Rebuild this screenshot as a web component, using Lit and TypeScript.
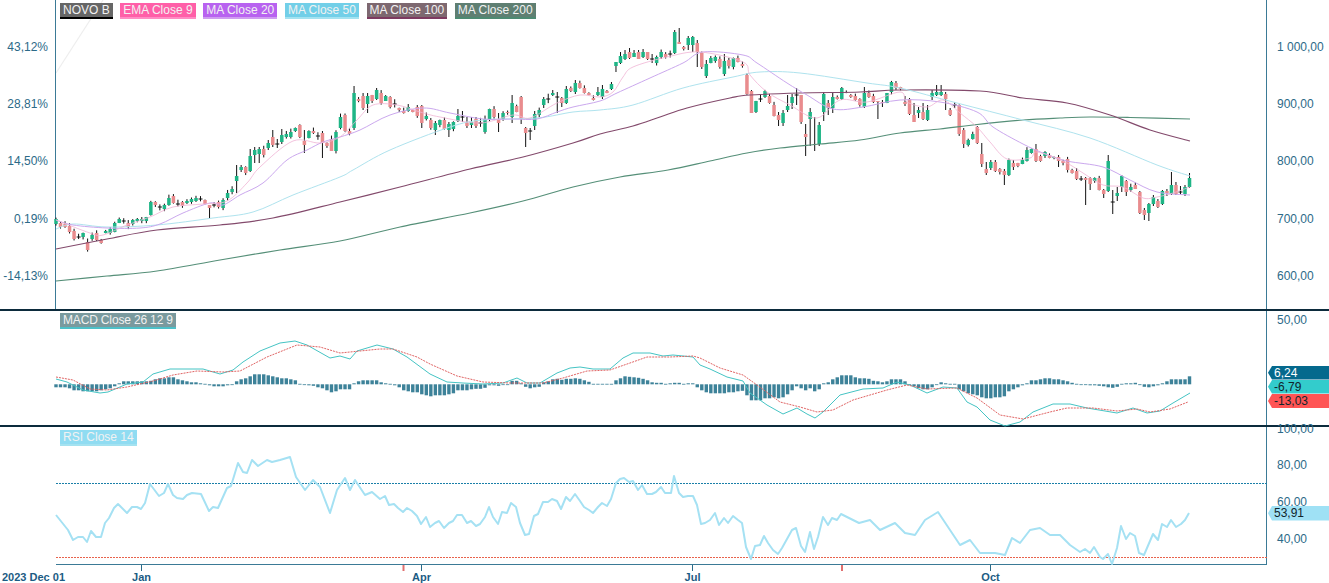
import { LitElement, html, css, svg } from "lit";
import { customElement } from "lit/decorators.js";

type Pt = [number, number];
type Candle = [number, number, "g" | "r" | "d"];

const STEP = 4.516;
const X0 = 56;
const cx = (i: number) => X0 + STEP * i;

const g = (t: number, b: number): Candle => [t, b, "g"];
const r = (t: number, b: number): Candle => [t, b, "r"];
const d = (y: number): Candle => [y, y, "d"];

const CANDLES: Candle[] = [
  g(219,224),r(223,227),r(224,227),r(226,232),r(231,239),d(237),g(233,237),r(242,250),g(235,239),r(233,240),
  r(240,243),g(231,233),g(229,233),g(223,232),g(219,223),d(221),r(223,227),g(220,224),g(219,221),g(219,221),
  g(217,221),g(202,215),r(202,205),d(207),g(205,209),g(198,205),r(196,203),d(204),r(202,206),g(201,203),
  g(199,202),g(198,201),d(199),r(200,204),r(205,208),d(205),r(202,207),g(200,208),g(193,198),g(189,192),
  g(176,181),g(167,170),r(167,173),g(156,171),g(150,155),g(149,154),r(149,155),g(143,148),r(137,145),d(144),
  g(135,142),g(134,137),g(132,137),g(128,131),r(125,137),r(141,145),g(131,138),r(131,133),d(136),r(133,143),
  r(143,146),r(139,151),g(132,151),g(117,128),r(115,131),r(131,134),g(93,128),r(99,101),r(96,108),g(96,104),
  r(95,101),g(90,99),r(93,103),g(96,101),r(97,107),d(104),r(108,110),r(111,113),g(107,111),r(110,112),
  r(107,116),r(106,123),g(116,119),r(120,128),g(123,130),g(120,125),r(120,129),g(124,130),g(122,129),g(116,121),
  d(117),r(123,126),g(122,125),r(119,126),d(123),g(119,132),g(109,119),r(109,117),r(119,123),g(113,119),
  r(112,113),g(103,117),r(106,112),r(97,119),r(128,133),d(131),g(114,126),g(110,115),g(99,105),d(99),
  g(93,95),d(97),r(98,103),g(89,103),r(88,91),g(83,92),r(83,88),r(88,93),r(93,95),r(98,100),
  g(92,95),g(89,97),r(91,93),g(84,89),g(62,66),g(56,63),g(54,59),r(52,58),g(53,57),r(52,59),
  g(52,57),r(52,59),d(59),g(57,63),g(52,57),r(54,57),d(54),g(32,53),r(42,44),r(47,49),
  g(38,45),g(37,45),r(43,52),r(53,67),g(64,76),g(58,63),g(57,61),r(59,67),g(61,74),r(60,66),
  g(58,67),r(58,62),r(64,66),r(75,94),r(91,113),g(101,112),d(99),g(91,97),r(96,103),r(105,116),
  r(115,120),g(113,123),g(106,110),g(97,103),d(95),r(95,122),r(134,137),g(112,119),r(144,145),g(125,144),
  g(94,112),r(103,108),g(97,108),r(97,99),g(88,99),r(92,93),r(95,97),r(96,100),r(99,105),g(93,107),
  r(93,97),r(96,102),r(101,102),r(102,103),g(93,103),g(82,92),r(83,88),r(87,89),r(102,104),r(99,114),
  r(115,122),g(110,113),r(112,119),g(110,120),g(93,97),g(92,95),g(92,95),r(94,99),r(110,115),d(105),
  r(105,134),r(130,144),g(140,145),g(134,139),r(127,143),r(154,164),r(169,173),g(162,168),r(162,171),r(169,172),
  r(171,175),g(160,175),r(163,167),r(163,166),g(160,164),g(150,161),g(149,153),r(149,161),r(156,161),g(152,156),
  r(155,158),g(157,158),r(157,161),r(161,163),r(159,170),r(170,173),r(171,179),d(179),r(178,180),r(178,184),
  g(178,181),r(178,190),r(190,194),g(161,191),d(202),g(193,196),g(176,187),r(181,192),g(187,190),r(185,189),
  r(192,213),r(210,215),g(204,213),g(197,204),r(201,207),g(191,204),r(191,193),g(185,194),r(185,194),d(192),
  g(187,194),g(178,187),
];

const WICKS: Record<number, Pt> = {
  34:[205,218],40:[165,193],41:[165,172],43:[149,172],44:[147,163],45:[147,163],47:[140,150],48:[130,147],49:[139,148],50:[129,144],
  55:[130,153],59:[131,158],66:[86,130],68:[93,110],69:[93,113],71:[88,100],81:[105,128],84:[121,135],87:[122,137],
  89:[109,122],90:[111,122],91:[117,128],92:[117,128],93:[117,128],98:[113,132],101:[95,123],103:[96,124],104:[127,147],105:[128,140],
  106:[111,130],108:[97,108],110:[90,96],111:[92,113],112:[97,107],113:[86,104],115:[80,94],120:[87,96],121:[85,99],123:[82,90],
  124:[62,72],125:[52,64],126:[50,60],127:[48,59],128:[50,57],129:[50,59],130:[49,58],131:[52,60],132:[54,63],137:[30,54],138:[28,44],
  140:[36,50],141:[36,52],142:[40,67],144:[60,78],148:[54,76],154:[90,113],156:[94,102],160:[112,126],161:[110,126],162:[95,112],
  163:[94,109],164:[88,105],166:[124,156],167:[108,146],168:[117,151],169:[122,146],170:[92,121],171:[100,115],172:[92,113],
  174:[87,100],179:[87,108],182:[101,119],183:[100,107],186:[81,90],188:[96,106],189:[98,115],190:[103,122],191:[107,118],
  192:[103,120],193:[105,121],194:[90,100],195:[85,96],196:[85,96],197:[92,110],198:[108,116],199:[102,108],
  201:[128,148],204:[126,144],205:[143,167],206:[162,175],207:[160,170],208:[160,172],210:[169,185],212:[160,170],217:[144,162],
  222:[155,167],226:[168,180],227:[176,181],228:[177,205],229:[177,190],232:[189,198],233:[155,192],234:[190,214],235:[187,201],
  236:[175,192],237:[180,196],240:[191,214],241:[208,220],242:[203,221],243:[195,206],244:[199,208],245:[190,205],246:[189,196],
  247:[172,195],248:[182,195],249:[186,194],250:[185,196],251:[173,188],
};

const HIST: number[] = [
  -3,-3,-3,-4,-6,-6,-7,-7,-7,-7,
  -6,-5,-4,-2,1,3,3,3,3,3,
  3,3.5,5,6,6,7,7,5,4,3,
  2,2,1,.5,-1,-2,-2,-2,-1,-.5,
  3,5,6,8,10,10,10,9,8,7,
  6,6,5,4,.5,-.5,-1,-1.5,-3,-4,
  -6,-8,-7,-5,-5,-5,1,3,4,4,
  4,4,2,1,.5,-1,-3,-6,-7,-8,
  -8,-10,-11,-12,-11,-11,-11,-10,-9,-6,
  -6,-6,-5,-4.5,-4.5,-3.5,-1,-1,-1.5,-.5,
  -.5,3.5,3.5,1,-2.5,-4,-3,-2.5,2,3,
  5,5.5,4.5,5.5,5.5,6,5.5,4,2.5,.5,
  .5,.5,.5,.5,4,6,8,7.5,7,6.5,
  5.5,4,2,1.5,1.5,.5,1,1.5,1.5,.5,
  1,1,-3,-6,-8,-9,-9,-9,-9,-8,
  -8,-7,-6.5,-11,-16,-16,-16,-14,-14,-13,
  -14,-13,-10,-6,-2,-4,-6,-4,-7,-5,
  1,2,5,7,9,9,9,7,6,6,
  5.5,3.5,3,2,3,5,5,5,3,-.5,
  -2,-4,-5,-5,-3,-.5,2,1,.5,.5,
  -5,-7,-9,-10,-11,-13,-14,-14,-13,-13,
  -12,-7,-5,-3,-1,1,4,4,5,6,
  6,5,5,4,3,1.5,.5,-.5,-.5,-1,
  -1,-1.5,-2,-3,-3.5,-2.5,.5,1,1,1.5,
  -.5,-2.5,-3,-2,-1,1,3,5,5,5,
  5,8,
];

const MA200: Pt[] = [[56,281],[107,276],[157,271],[220,260],[280,250],[340,241],[400,227],[470,213],[523,201],[573,187],[620,177],[668,170],[710,161],[747,153],[780,148],[820,144],[860,140],[900,133],[940,129],[973,125],[1023,120],[1060,118],[1090,117],[1130,117.5],[1190,119]];
const MA100: Pt[] = [[56,249],[107,239],[157,230],[220,225],[273,218],[340,202],[400,187],[470,169],[523,157],[573,143],[600,134],[633,126],[660,117],[687,108],[730,98],[750,95],[800,93],[860,92],[900,90],[980,91],[1023,98],[1067,103],[1110,115],[1150,130],[1190,141]];
const MA50: Pt[] = [[56,229],[73,224],[107,227],[157,225],[213,218],[253,212],[293,195],[340,177],[353,170],[390,150],[450,127],[483,120],[537,118],[573,112],[600,110],[633,105],[683,88],[733,77],[760,72],[800,73],[867,83],[900,88],[957,103],[1023,120],[1090,138],[1157,165],[1190,176]];
const MA20: Pt[] = [[56,220],[73,225],[107,228],[140,228],[160,224],[183,213],[210,203],[223,205],[240,195],[263,183],[287,160],[307,150],[323,142],[340,137],[360,130],[390,115],[423,108],[450,113],[483,119],[513,119],[537,119],[557,112],[573,107],[600,101],[617,93],[650,78],[683,63],[703,52],[743,55],[757,63],[787,83],[807,95],[833,109],[863,107],[900,100],[940,102],[977,112],[993,127],[1023,144],[1043,153],[1067,161],[1103,167],[1130,180],[1157,192],[1190,195]];
const EMA9: Pt[] = [[56,220],[90,233],[103,235],[127,225],[150,217],[173,207],[203,204],[227,201],[247,183],[260,167],[293,141],[320,143],[340,137],[357,120],[373,105],[397,105],[420,112],[440,117],[480,123],[513,115],[530,118],[557,103],[580,95],[600,97],[613,92],[623,77],[633,67],[667,57],[700,52],[743,62],[750,75],[767,92],[790,105],[817,118],[840,100],[867,102],[900,92],[907,102],[927,107],[943,100],[960,113],[977,127],[990,142],[1007,159],[1030,158],[1037,152],[1063,161],[1083,173],[1103,185],[1123,187],[1143,198],[1157,197],[1173,193],[1190,187]];

const MACD: Pt[] = [[56,379],[67,382],[83,390],[100,393],[108,392],[127,384],[143,382],[153,374],[170,369],[203,369],[220,374],[233,370],[243,362],[260,351],[280,343],[295,341],[307,345],[330,358],[340,356],[350,359],[357,351],[377,345],[393,349],[407,357],[430,374],[447,382],[463,383],[483,384],[503,383],[517,378],[527,383],[540,383],[557,373],[570,368],[580,367],[593,369],[610,369],[623,358],[633,353],[650,353],[663,356],[673,355],[693,357],[700,365],[710,369],[727,377],[743,381],[750,393],[767,405],[783,414],[797,408],[807,414],[815,418],[823,412],[840,395],[863,389],[883,388],[897,382],[910,385],[927,393],[943,387],[957,388],[967,402],[977,407],[990,420],[1005,426],[1020,422],[1033,412],[1053,404],[1070,404],[1087,408],[1117,413],[1133,408],[1147,413],[1160,411],[1173,403],[1190,393]];
const SIGNAL: Pt[] = [[56,377],[73,380],[90,389],[107,390],[127,387],[153,381],[173,375],[197,371],[223,372],[240,371],[267,357],[297,345],[320,347],[340,353],[380,349],[393,349],[417,357],[430,364],[457,376],[483,382],[510,383],[530,383],[543,383],[563,378],[587,371],[610,370],[630,363],[647,357],[670,357],[693,356],[700,358],[720,368],[743,375],[757,385],[780,402],[800,407],[817,412],[833,410],[853,400],[887,390],[907,385],[927,389],[957,388],[977,398],[1000,415],[1023,419],[1050,412],[1067,408],[1093,408],[1117,411],[1137,409],[1150,412],[1170,409],[1188,402]];

const RSI: Pt[] = [[56,515],[68,530],[73,540],[78,537],[83,537],[87,542],[91,531],[96,537],[101,537],[105,523],[109,518],[114,508],[118,504],[127,513],[132,507],[137,507],[141,509],[145,503],[150,484],[159,496],[164,493],[168,484],[173,495],[177,498],[183,499],[187,495],[192,493],[201,494],[209,511],[213,507],[218,508],[227,488],[231,486],[238,463],[243,472],[247,473],[252,460],[258,466],[267,460],[272,462],[280,460],[290,457],[296,477],[305,490],[313,480],[320,487],[330,513],[337,490],[345,478],[350,490],[355,480],[365,495],[372,492],[380,499],[385,496],[389,505],[394,504],[398,508],[403,512],[407,508],[412,511],[417,516],[421,524],[426,517],[430,527],[435,523],[439,521],[444,528],[449,523],[453,521],[457,515],[462,515],[467,523],[471,521],[476,526],[480,524],[485,517],[489,507],[493,517],[498,524],[502,512],[507,513],[511,503],[516,507],[520,523],[525,535],[529,534],[534,516],[538,514],[543,502],[548,502],[552,499],[557,501],[561,509],[566,497],[570,501],[575,494],[580,501],[584,507],[589,510],[593,513],[598,507],[602,503],[607,506],[611,499],[616,483],[620,479],[624,478],[629,482],[633,481],[638,490],[642,485],[647,494],[652,494],[656,492],[661,487],[665,493],[671,493],[674,476],[679,493],[683,497],[688,496],[693,496],[697,505],[701,524],[705,523],[710,520],[715,513],[719,525],[724,518],[728,523],[733,516],[738,520],[742,523],[746,547],[751,559],[755,546],[760,545],[764,536],[768,543],[773,550],[778,554],[782,548],[792,530],[796,528],[801,546],[805,552],[810,532],[814,549],[818,537],[823,517],[828,525],[832,518],[837,520],[841,514],[859,523],[870,520],[880,530],[895,523],[905,533],[915,535],[925,520],[938,512],[950,530],[960,545],[970,540],[980,553],[995,553],[1005,555],[1012,538],[1020,543],[1030,530],[1040,528],[1050,535],[1060,535],[1070,545],[1080,552],[1085,549],[1090,553],[1094,547],[1100,557],[1103,559],[1108,554],[1112,564],[1117,548],[1121,526],[1126,539],[1130,533],[1135,536],[1139,553],[1144,555],[1153,534],[1158,540],[1162,524],[1167,527],[1171,520],[1176,527],[1181,524],[1185,520],[1189,513]];

const path = (pts: Pt[]) => "M" + pts.map((p) => p.join(",")).join("L");

// Catmull-Rom through the traced points, so the moving averages stay round.
const smooth = (pts: Pt[]) => {
  let out = `M${pts[0][0]},${pts[0][1]}`;
  for (let i = 0; i < pts.length - 1; i++) {
    const p0 = pts[Math.max(i - 1, 0)];
    const p1 = pts[i];
    const p2 = pts[i + 1];
    const p3 = pts[Math.min(i + 2, pts.length - 1)];
    const c1x = p1[0] + (p2[0] - p0[0]) / 6;
    const c1y = p1[1] + (p2[1] - p0[1]) / 6;
    const c2x = p2[0] - (p3[0] - p1[0]) / 6;
    const c2y = p2[1] - (p3[1] - p1[1]) / 6;
    out += `C${c1x},${c1y} ${c2x},${c2y} ${p2[0]},${p2[1]}`;
  }
  return out;
};

const seeded = (i: number) => {
  const v = Math.sin(i * 12.9898 + 4.1) * 43758.5453;
  return v - Math.floor(v);
};

const wickFor = (c: Candle, i: number): Pt => {
  if (WICKS[i]) return WICKS[i];
  const up = seeded(i) * 3.5;
  const dn = seeded(i + 300) * 2.5;
  return [c[0] - up - (c[2] === "d" ? 2 : 0), c[1] + dn + (c[2] === "d" ? 2 : 0)];
};

@customElement("app-root")
export class AppRoot extends LitElement {
  static styles = css`
    :host {
      display: block;
      width: 1329px;
      height: 583px;
      overflow: hidden;
      background: #fff;
      font-family: "Liberation Sans", Arial, sans-serif;
    }
    .chart {
      display: flex;
      flex-direction: column;
      height: 100%;
    }
    .pane {
      position: relative;
      flex: none;
    }
    .pane svg {
      display: block;
      width: 1329px;
      height: 100%;
      overflow: visible;
    }
    .price { height: 309px; border-bottom: 2px solid #0c2b3c; }
    .macd { height: 114px; border-bottom: 2px solid #0c2b3c; }
    .rsi { height: 156px; }
    .legend {
      position: absolute;
      top: 3px;
      left: 60px;
      display: flex;
      gap: 7.6px;
    }
    .macd .legend { top: 2px; }
    .rsi .legend { top: 3px; }
    .tag {
      height: 14px;
      line-height: 14px;
      padding: 0 3px;
      font-size: 12px;
      color: #f2f2f2;
      white-space: nowrap;
      border-bottom: 2px solid;
    }
    .t-novo { background: #666; border-color: #000; }
    .t-ema { background: #ff5fa8; border-color: #ff8cc4; }
    .t-ma20 { background: #b862f0; border-color: #cf9df0; }
    .t-ma50 { background: #72cfe8; border-color: #a4e2f0; }
    .t-ma100 { background: #7d6870; border-color: #7d3a60; }
    .t-ma200 { background: #5f7f72; border-color: #4d8a72; }
    .t-macd { background: #7a9a9e; border-color: #4dc0c8; letter-spacing: -0.16px; }
    .t-rsi { background: #90dcf2; border-color: #a4e2f0; }
    text {
      font-family: "Liberation Sans", Arial, sans-serif;
      font-size: 12px;
      dominant-baseline: central;
    }
    .axis-label { fill: #2c6a88; }
    .date { fill: #1c5c84; font-size: 11px; font-weight: bold; }
    .axis { stroke: #3b7a96; stroke-width: 1; }
    .line { fill: none; stroke-linejoin: round; }
    .wick { stroke: #111; stroke-width: 1; }
    .doji { stroke: #111; stroke-width: 1; }
    .body-g { fill: #1fb586; }
    .body-r { fill: #e98c8e; }
    .l-ema { stroke: #f0b4d4; stroke-width: 0.8; }
    .l-ma20 { stroke: #cba8ee; stroke-width: 1; }
    .l-ma50 { stroke: #afe3ee; stroke-width: 1; }
    .l-ma100 { stroke: #834a6c; stroke-width: 1.2; }
    .l-ma200 { stroke: #558f78; stroke-width: 1.2; }
    .l-macd { stroke: #45c4c4; stroke-width: 1; }
    .l-signal { stroke: #e06464; stroke-width: 1; stroke-dasharray: 2 1; }
    .l-rsi { stroke: #a5e1f3; stroke-width: 2; }
    .bar { fill: #3d8299; }
    .seg-top { fill: #1a7fa8; }
    .seg-bot { fill: #e8624c; }
    .tick { stroke: #2c6a88; }
    .tick-red { stroke: #e07070; stroke-width: 2; }
    .faint { stroke: #eeeeee; stroke-width: 1.2; }
    .tip-a { fill: #05698d; }
    .tip-b { fill: #33cccc; }
    .tip-c { fill: #ff5555; }
    .tip-d { fill: #9fe1f5; }
    .tip-light { fill: #fff; }
    .tip-dark { fill: #10252c; }
  `;

  private axisLabels(items: [string, number][]) {
    return items.map(
      ([t, y]) => svg`<text class="axis-label" x="1277" y=${y}>${t}</text>`
    );
  }

  private priceTag(y: number, h: number, text: string, cls: string, txt: string) {
    const m = y + h / 2;
    const pts = `1268,${m} 1272,${y} 1329,${y} 1329,${y + h} 1272,${y + h}`;
    return svg`
      <polygon class=${cls} points=${pts}></polygon>
      <text class=${txt} x="1274" y=${m}>${text}</text>`;
  }

  private limit(y: number, cls: string) {
    const segs = [];
    for (let x = 56; x < 1266; x += 3) {
      segs.push(svg`<rect class=${cls} x=${x} y=${y} width="2" height="1"></rect>`);
    }
    return segs;
  }

  private renderCandles() {
    return CANDLES.map((c, i) => {
      const x = cx(i);
      const [wt, wb] = wickFor(c, i);
      const wick = svg`<line class="wick" x1=${x} x2=${x} y1=${wt} y2=${wb}></line>`;
      if (c[2] === "d") {
        return svg`${wick}<line class="doji" x1=${x - 2} x2=${x + 2} y1=${c[0]} y2=${c[0]}></line>`;
      }
      return svg`${wick}<rect class=${c[2] === "g" ? "body-g" : "body-r"} x=${x - 1.75} y=${c[0]} width="3.5" height=${c[1] - c[0]}></rect>`;
    });
  }

  private renderBars() {
    const base = 384.3;
    return HIST.map((v, i) => {
      const y = v >= 0 ? base - v : base;
      const h = Math.max(Math.abs(v), 0.8);
      return svg`<rect class="bar" x=${cx(i) - 1.7} y=${y} width="3.4" height=${h}></rect>`;
    });
  }

  render() {
    const pct: [string, number][] = [
      ["43,12%", 47],
      ["28,81%", 104],
      ["14,50%", 161],
      ["0,19%", 219],
      ["-14,13%", 276],
    ];
    return html`
      <div class="chart">
        <section class="pane price">
          <svg viewBox="0 0 1329 309">
            <line class="faint" x1="56" y1="73" x2="103" y2="0"></line>
            <line class="axis" x1="55.5" x2="55.5" y1="0" y2="309"></line>
            <line class="axis" x1="1266.5" x2="1266.5" y1="0" y2="309"></line>
            ${pct.map(
              ([t, y]) => svg`<text class="axis-label" x="48" y=${y} text-anchor="end">${t}</text>`
            )}
            ${this.axisLabels([
              ["1 000,00", 47],
              ["900,00", 104],
              ["800,00", 161],
              ["700,00", 219],
              ["600,00", 276],
            ])}
            ${this.renderCandles()}
            <path class="line l-ma200" d=${smooth(MA200)}></path>
            <path class="line l-ma100" d=${smooth(MA100)}></path>
            <path class="line l-ma50" d=${smooth(MA50)}></path>
            <path class="line l-ma20" d=${smooth(MA20)}></path>
            <path class="line l-ema" d=${smooth(EMA9)}></path>
          </svg>
          <div class="legend">
            <span class="tag t-novo">NOVO B</span>
            <span class="tag t-ema">EMA Close 9</span>
            <span class="tag t-ma20">MA Close 20</span>
            <span class="tag t-ma50">MA Close 50</span>
            <span class="tag t-ma100">MA Close 100</span>
            <span class="tag t-ma200">MA Close 200</span>
          </div>
        </section>

        <section class="pane macd">
          <svg viewBox="0 311 1329 114">
            <line class="axis" x1="1266.5" x2="1266.5" y1="311" y2="425"></line>
            ${this.axisLabels([["50,00", 320]])}
            ${this.renderBars()}
            <path class="line l-macd" d=${path(MACD)}></path>
            <path class="line l-signal" d=${path(SIGNAL)}></path>
            ${this.priceTag(366, 13.5, "6,24", "tip-a", "tip-light")}
            ${this.priceTag(380, 13.5, "-6,79", "tip-b", "tip-dark")}
            ${this.priceTag(394, 14, "-13,03", "tip-c", "tip-dark")}
          </svg>
          <div class="legend">
            <span class="tag t-macd">MACD Close 26 12 9</span>
          </div>
        </section>

        <section class="pane rsi">
          <svg viewBox="0 427 1329 156">
            <line class="axis" x1="1266.5" x2="1266.5" y1="427" y2="565"></line>
            <line class="axis" x1="56" x2="1267" y1="564.5" y2="564.5"></line>
            ${this.limit(483, "seg-top")}
            ${this.limit(557, "seg-bot")}
            ${this.axisLabels([
              ["100,00", 429],
              ["80,00", 465],
              ["60,00", 502],
              ["40,00", 539],
            ])}
            <path class="line l-rsi" d=${path(RSI)}></path>
            ${this.priceTag(506, 14.5, "53,91", "tip-d", "tip-dark")}
            <line class="tick" x1="141.5" x2="141.5" y1="565" y2="571"></line>
            <line class="tick-red" x1="403.5" x2="403.5" y1="565" y2="571"></line>
            <line class="tick" x1="421.5" x2="421.5" y1="565" y2="571"></line>
            <line class="tick" x1="692.5" x2="692.5" y1="565" y2="571"></line>
            <line class="tick-red" x1="842" x2="842" y1="565" y2="571"></line>
            <line class="tick" x1="990.5" x2="990.5" y1="565" y2="571"></line>
            <text class="date" x="2" y="577">2023 Dec 01</text>
            <text class="date" x="141.5" y="577" text-anchor="middle">Jan</text>
            <text class="date" x="421.5" y="577" text-anchor="middle">Apr</text>
            <text class="date" x="692.5" y="577" text-anchor="middle">Jul</text>
            <text class="date" x="990.5" y="577" text-anchor="middle">Oct</text>
          </svg>
          <div class="legend">
            <span class="tag t-rsi">RSI Close 14</span>
          </div>
        </section>
      </div>
    `;
  }
}
